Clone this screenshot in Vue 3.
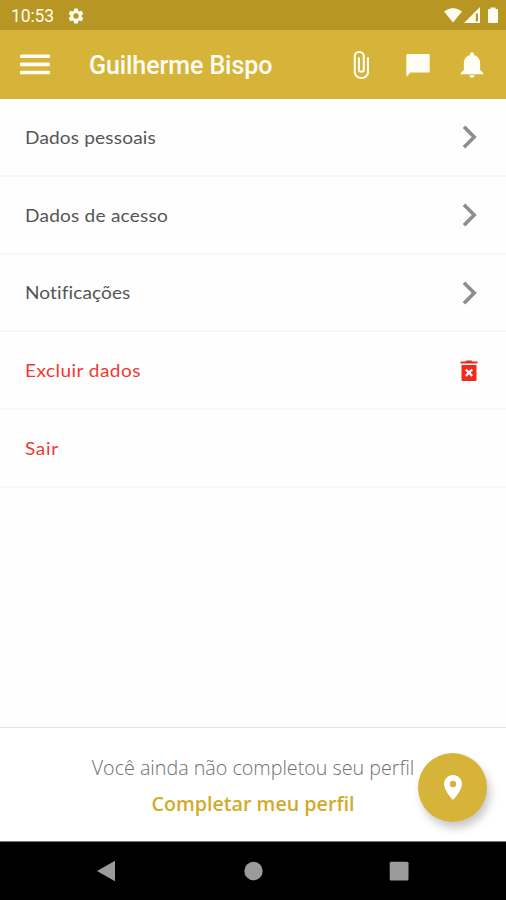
<template>
  <div class="screen">
    <div class="status-bar">
      <span class="time">10:53</span>
      <svg class="gear" viewBox="0 0 24 24">
        <path d="M19.4 13c0-.3.1-.6.1-1s0-.7-.1-1l2.1-1.6c.2-.2.2-.4.1-.6l-2-3.500c-.1-.2-.4-.3-.6-.2l-2.500 1c-.5-.4-1.100-.7-1.700-1l-.4-2.600c0-.3-.2-.5-.4-.5h-4c-.2 0-.5.2-.5.4l-.4 2.700c-.6.2-1.100.6-1.700 1l-2.500-1c-.2-.1-.5 0-.6.2l-2 3.500c-.1.2-.1.400.1.600L4.500 11c0 .3-.1.600-.1 1s0 .7.1 1l-2.100 1.600c-.2.2-.2.4-.1.600l2 3.500c.1.2.4.300.6.200l2.500-1c.5.400 1.100.700 1.700 1l.4 2.600c0 .300.200.500.500.500h4c.200 0 .500-.200.500-.400l.400-2.700c.600-.200 1.100-.600 1.700-1l2.500 1c.200.100.500 0 .600-.200l2-3.500c.100-.200.100-.400-.100-.600zM12 15.600a3.600 3.600 0 1 1 0-7.200 3.600 3.600 0 0 1 0 7.200z" />
      </svg>
      <svg class="signals" viewBox="0 0 56 18">
        <path d="M0 4.500Q9-2.500 18 4.500L9 15.500z" />
        <path fill-rule="evenodd" d="M20 16L36 0V16zM31.800 6.500V14.500H34V6.500z" />
        <path d="M44 3q0-1 1-1h1.500V.5h5V2H53q1 0 1 1v12q0 1-1 1h-8q-1 0-1-1z" />
      </svg>
    </div>

    <header class="app-bar">
      <svg class="burger" viewBox="0 0 30 21">
        <path d="M1.500 2.300h27M1.500 10.400h27M1.500 18.500h27" />
      </svg>
      <h1>Guilherme Bispo</h1>
      <svg class="icon clip" viewBox="5 1 13 22" preserveAspectRatio="none">
        <path d="M16.500 6v11.500c0 2.210-1.790 4-4 4s-4-1.790-4-4V5a2.500 2.500 0 0 1 5 0v10.500c0 .55-.45 1-1 1s-1-.45-1-1V6H10v9.500a2.500 2.500 0 0 0 5 0V5c0-2.210-1.790-4-4-4S7 2.790 7 5v12.500c0 3.040 2.460 5.500 5.500 5.500s5.500-2.460 5.500-5.500V6h-1.500z" />
      </svg>
      <svg class="icon chat" viewBox="0 0 24 24">
        <path d="M21 2.500H3c-.6 0-1 .4-1 1V22l3.500-3.500H21c.6 0 1-.4 1-1v-14c0-.6-.4-1-1-1z" />
      </svg>
      <svg class="icon bell" viewBox="0 0 24 24">
        <path d="M12 23c1.300 0 2.300-1 2.300-2.200H9.700C9.700 22 10.700 23 12 23zM19 16.500V10.500c0-3.500-2.200-6.200-5.300-7V2.700C13.700 1.700 12.900 1 12 1s-1.700.7-1.700 1.700v.8C7.200 4.300 5 7 5 10.500v6l-2.600 2.200V20h19.200v-1.300z" />
      </svg>
    </header>

    <ul class="menu">
      <li v-for="item in items" :key="item.text" :class="{ danger: item.danger }">
        <span :style="{ letterSpacing: item.spacing + 'px' }">{{ item.text }}</span>
        <svg v-if="item.icon === 'chevron'" class="chevron" viewBox="0 0 16 24">
          <path d="M2 1.800L12.200 12L2 22.200" />
        </svg>
        <svg v-if="item.icon === 'trash'" class="trash" viewBox="0 0 18 22">
          <path d="M.5 1.500H5.500L6.500.5h5l1 1h5v2H.5z" />
          <path d="M1.500 5h15v15q0 1-1 1h-13q-1 0-1-1z" />
          <path class="cross" d="M5.800 9.500l6.400 6.400M12.200 9.500l-6.400 6.400" />
        </svg>
      </li>
    </ul>

    <footer class="profile">
      <p>Você ainda não completou seu perfil</p>
      <a>Completar meu perfil</a>
      <button class="fab">
        <svg viewBox="0 0 18 25">
          <path fill-rule="evenodd" d="M9 0C4 0 0 4 0 9c0 6.500 9 16 9 16s9-9.500 9-16c0-5-4-9-9-9zm0 12.200a3.200 3.200 0 1 1 0-6.400 3.200 3.200 0 0 1 0 6.400z" />
        </svg>
      </button>
    </footer>

    <nav class="nav-bar">
      <svg viewBox="0 0 20 22"><path d="M0 11L18 .7V21.300z" /></svg>
      <svg viewBox="0 0 20 22"><circle cx="10.500" cy="11" r="9.200" /></svg>
      <svg viewBox="0 0 20 22"><rect x=".7" y="1.700" width="18.800" height="18.800" rx="1.500" /></svg>
    </nav>
  </div>
</template>

<script setup>
const items = [
  { text: 'Dados pessoais', icon: 'chevron', spacing: 0.15 },
  { text: 'Dados de acesso', icon: 'chevron', spacing: 0.2 },
  { text: 'Notificações', icon: 'chevron', spacing: 0.1 },
  { text: 'Excluir dados', icon: 'trash', spacing: 0.4, danger: true },
  { text: 'Sair', spacing: 0.6, danger: true }
];
</script>

<style>
  body {
    margin: 0;
  }
</style>

<style scoped>
  .screen {
    display: flex;
    flex-direction: column;
    width: 506px;
    height: 900px;
    overflow: hidden;
    background-color: #fefefe;
    font-family: Lato, sans-serif;
  }

  .status-bar {
    display: flex;
    align-items: center;
    box-sizing: border-box;
    height: 30px;
    padding: 1px 8px 0 11px;
    background-color: #b79624;
    color: #fffbe8;
    fill: #fffdf2;
  }

  .time {
    width: 56px;
    font: 17.5px/30px Roboto, sans-serif;
    letter-spacing: -0.1px;
  }

  .gear {
    width: 18px;
    height: 18px;
  }

  .signals {
    width: 56px;
    height: 18px;
    margin-left: auto;
    margin-right: -2px;
  }

  .app-bar {
    display: flex;
    align-items: center;
    box-sizing: border-box;
    height: 69px;
    padding: 0 20px;
    background-color: #d6b439;
    color: #fffdf4;
    fill: #fffdf4;
  }

  .burger {
    width: 30px;
    height: 21px;
    stroke: #fffdf4;
    stroke-width: 3.6;
    stroke-linecap: round;
  }

  .app-bar h1 {
    flex: 1;
    margin: 3px 0 0 39px;
    font: 500 25px/30px Roboto, sans-serif;
    letter-spacing: -0.08px;
    white-space: nowrap;
  }

  .icon {
    flex: none;
    width: 28px;
    height: 28px;
  }

  .clip {
    width: 18px;
    margin-right: 35px;
  }

  .chat {
    margin-right: 26px;
  }

  .menu {
    flex: 1;
    margin: 0;
    padding: 0;
    list-style: none;
  }

  .menu li {
    display: flex;
    align-items: center;
    justify-content: space-between;
    box-sizing: border-box;
    height: 77.8px;
    padding: 1px 28px 0 25px;
    border-bottom: 2px solid #f7f7f7;
    color: #555;
    font-size: 17px;
  }

  /* widened a little, the menu labels have broad letters */
  .menu li span {
    transform: scaleX(1.12);
    transform-origin: left;
  }

  .menu li.danger {
    color: #ee3a33;
  }

  .chevron {
    width: 16px;
    height: 24px;
    fill: none;
    stroke: #8d8d8d;
    stroke-width: 3.6;
  }

  .trash {
    width: 18px;
    height: 22px;
    fill: #f2291d;
  }

  .cross {
    stroke: #fff;
    stroke-width: 2.2;
  }

  .profile {
    position: relative;
    display: flex;
    flex-direction: column;
    align-items: center;
    box-sizing: border-box;
    height: 114px;
    padding-top: 26px;
    border-top: 1px solid #e2e2e2;
    background-color: #fff;
    font-family: "Open Sans", sans-serif;
  }

  .profile p {
    margin: 0;
    color: #707070;
    font-size: 19.7px;
    font-weight: 300;
    line-height: 28px;
  }

  .profile a {
    margin-top: 8px;
    color: #d1ab2b;
    font-size: 19.7px;
    font-weight: 600;
    line-height: 28px;
  }

  .fab {
    position: absolute;
    top: 25px;
    right: 19px;
    display: flex;
    align-items: center;
    justify-content: center;
    width: 69px;
    height: 69px;
    padding: 0;
    border: none;
    border-radius: 50%;
    background-color: #d6b439;
    box-shadow: 3px 6px 9px rgba(0, 0, 0, 0.22);
  }

  .fab svg {
    width: 18px;
    height: 25px;
    fill: #fff;
  }

  .nav-bar {
    display: flex;
    align-items: center;
    justify-content: space-between;
    box-sizing: border-box;
    height: 59px;
    padding: 0 97px;
    border-top: 1px solid #777;
    background-color: #000;
    fill: #9b9b9b;
  }

  .nav-bar svg {
    width: 20px;
    height: 22px;
  }
</style>
